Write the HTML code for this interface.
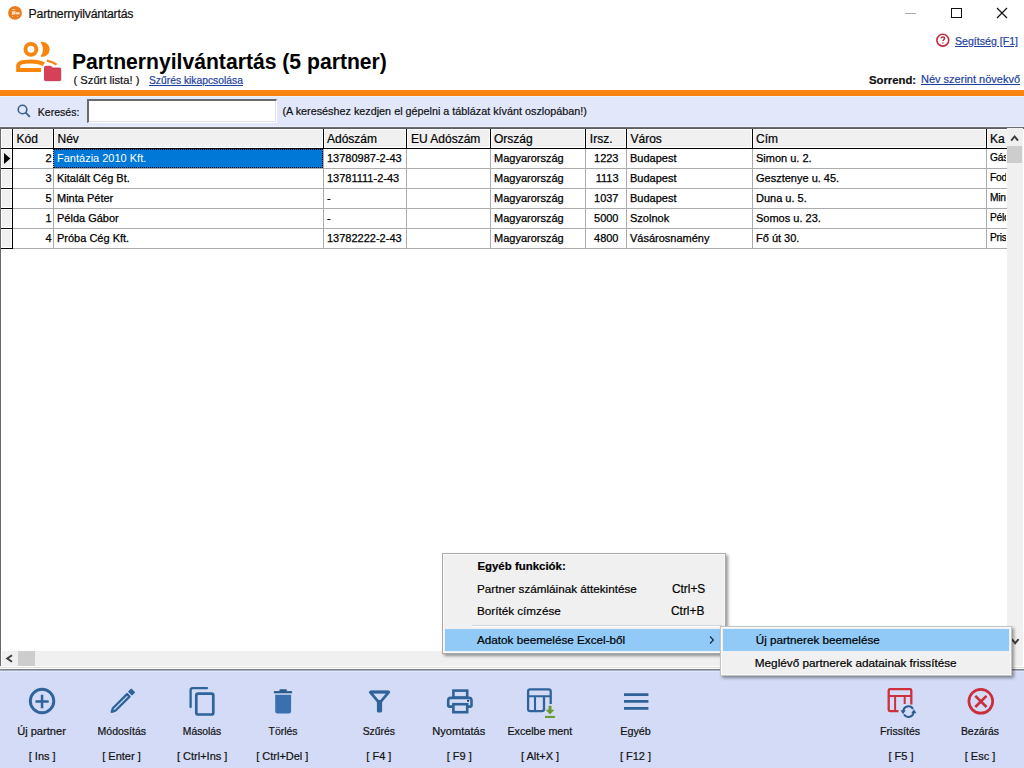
<!DOCTYPE html><html><head><meta charset="utf-8"><style>
*{margin:0;padding:0;box-sizing:border-box}
html,body{width:1024px;height:768px;overflow:hidden;background:#fff;font-family:"Liberation Sans",sans-serif;color:#000}
.a{position:absolute}
.t{position:absolute;white-space:nowrap;line-height:1;-webkit-text-stroke:0.2px currentColor}
.lnk{color:#1d3f9e;text-decoration:underline;text-underline-offset:0.5px}
.hd{font-size:12px;color:#000}
.d{font-size:11px;color:#000;-webkit-text-stroke:0.25px currentColor}
.tl{font-size:11px;color:#111;text-align:center}
</style></head><body>
<svg class="a" style="left:8px;top:6px" width="14" height="14" viewBox="8 6 14 14"><circle cx="15" cy="12.9" r="6.9" fill="#ec7b1f"/><rect x="12.2" y="9.2" width="3" height="0.9" fill="#fde3c8"/><path d="M11.9 11.2H15.6V14.4H13.2V15H11.9Z" fill="#fde3c8" opacity=".92"/><rect x="16" y="12.2" width="3.6" height="2.2" fill="#fde3c8"/><rect x="12.1" y="16" width="0.9" height="0.9" fill="#fde3c8"/><rect x="17.1" y="16" width="0.9" height="0.9" fill="#fde3c8"/></svg>
<div class="t" style="left:28.6px;top:8.1px;font-size:12.3px;letter-spacing:-0.24px;color:#111">Partnernyilvántartás</div>
<div class="a" style="left:905px;top:13px;width:11px;height:1px;background:#aaa"></div>
<div class="a" style="left:950.5px;top:7.8px;width:11px;height:10.2px;border:1.3px solid #111"></div>
<svg class="a" style="left:996px;top:7px" width="12" height="12" viewBox="0 0 12 12"><path d="M1 1L11 11M11 1L1 11" stroke="#111" stroke-width="1.2"/></svg>
<svg class="a" style="left:12px;top:36px" width="52" height="48" viewBox="12 36 52 48">
<circle cx="30.9" cy="49.3" r="5.45" fill="none" stroke="#f7860f" stroke-width="3.9"/>
<path d="M40.5 42A7.5 7.5 0 1 1 40.5 56.6A11.9 11.9 0 0 0 40.5 42Z" fill="#f7860f"/>
<path d="M41 69.9H18.2V65.5C18.2 62.5 24 61.4 30.5 61.4C36 61.4 41 62.5 43.8 64.3" fill="none" stroke="#f7860f" stroke-width="4"/>
<path d="M46.8 60.6C50 61.2 54 62.6 56.6 64.6" fill="none" stroke="#f7860f" stroke-width="2.3"/>
<path d="M44.5 67.5Q44.5 66.3 45.7 66.3H51L52.5 68H59.7Q60.75 68 60.75 69V79.7Q60.75 80.7 59.7 80.7H45.5Q44.5 80.7 44.5 79.7Z" fill="#d8405a" stroke="#b82f48" stroke-width=".8"/>
</svg>
<div class="t" style="left:72px;top:51.1px;font-size:21.15px;font-weight:bold;-webkit-text-stroke:0">Partnernyilvántartás (5 partner)</div>
<div class="t" style="left:73.5px;top:74.8px;font-size:11.2px;color:#111">( Szűrt lista! )</div>
<div class="t lnk" style="left:149px;top:76px;font-size:10.3px">Szűrés kikapcsolása</div>
<svg class="a" style="left:935px;top:33px" width="16" height="16" viewBox="0 0 16 16"><circle cx="7.8" cy="7.2" r="5.9" fill="none" stroke="#bf2b40" stroke-width="1.6"/><path d="M6 5.5Q6.2 3.9 7.9 3.9Q9.6 4 9.5 5.4Q9.4 6.4 8.5 7Q7.9 7.5 7.9 8.1" fill="none" stroke="#b0283e" stroke-width="1.4"/><circle cx="7.9" cy="9.9" r="0.75" fill="#b0283e"/></svg>
<div class="t lnk" style="left:955px;top:36px;font-size:10.6px">Segítség [F1]</div>
<div class="t" style="left:869px;top:75px;font-size:11.3px;font-weight:bold;color:#111">Sorrend:</div>
<div class="t lnk" style="left:921px;top:73.6px;font-size:11px">Név szerint növekvő</div>
<div class="a" style="left:0;top:90px;width:1024px;height:6px;background:#f98310"></div>
<div class="a" style="left:0;top:96px;width:1024px;height:31px;background:#e2e8fa"></div>
<div class="a" style="left:0;top:96px;width:1024px;height:1px;background:#eaf2f8"></div>
<svg class="a" style="left:16px;top:103px" width="16" height="16" viewBox="0 0 16 16"><circle cx="6.5" cy="6.5" r="4.3" fill="none" stroke="#3a5f8f" stroke-width="1.6"/><path d="M9.7 9.7L13.4 13.4" stroke="#3a5f8f" stroke-width="1.8" stroke-linecap="round"/></svg>
<div class="t" style="left:37.8px;top:107.3px;font-size:10.55px;color:#111">Keresés:</div>
<div class="a" style="left:87px;top:99px;width:190px;height:24px;background:#fff;border-top:2px solid #6a6a6a;border-left:2px solid #6a6a6a;border-right:1px solid #fff;border-bottom:1px solid #fff"></div>
<div class="a" style="left:89px;top:121px;width:187px;height:1px;background:#e2e2e6"></div>
<div class="a" style="left:275px;top:101px;width:1px;height:21px;background:#e2e2e6"></div>
<div class="a" style="left:0;top:126px;width:1024px;height:1px;background:#edf1fc"></div>
<div class="t" style="left:282.5px;top:106px;font-size:10.8px;color:#111">(A kereséshez kezdjen el gépelni a táblázat kívánt oszlopában!)</div>
<div class="a" style="left:0;top:127px;width:1024px;height:542px;background:#fff"></div>
<div class="a" style="left:0;top:127px;width:1024px;height:1px;background:#686c70"></div>
<div class="a" style="left:0;top:128px;width:1024px;height:1px;background:#5c5e62"></div>
<div class="a" style="left:0;top:127px;width:1px;height:540px;background:#6a6a6a"></div>
<div class="a" style="left:1px;top:129px;width:1006px;height:19px;background:#000"></div>
<div class="a" style="left:1px;top:148px;width:1006px;height:1px;background:#000"></div>
<div class="a" style="left:1px;top:129px;width:11px;height:19px;background:#f0f0f0;border:1px solid #fff"></div>
<div class="a" style="left:13px;top:129px;width:40px;height:19px;background:#f0f0f0;border:1px solid #fff;border-right-width:1px"></div>
<div class="a" style="left:54px;top:129px;width:269px;height:19px;background:#f0f0f0;border:1px solid #fff;border-right-width:1px"></div>
<div class="a" style="left:324px;top:129px;width:82px;height:19px;background:#f0f0f0;border:1px solid #fff;border-right-width:1px"></div>
<div class="a" style="left:407px;top:129px;width:83px;height:19px;background:#f0f0f0;border:1px solid #fff;border-right-width:1px"></div>
<div class="a" style="left:491px;top:129px;width:94px;height:19px;background:#f0f0f0;border:1px solid #fff;border-right-width:1px"></div>
<div class="a" style="left:586px;top:129px;width:40px;height:19px;background:#f0f0f0;border:1px solid #fff;border-right-width:1px"></div>
<div class="a" style="left:627px;top:129px;width:125px;height:19px;background:#f0f0f0;border:1px solid #fff;border-right-width:1px"></div>
<div class="a" style="left:753px;top:129px;width:233px;height:19px;background:#f0f0f0;border:1px solid #fff;border-right-width:1px"></div>
<div class="a" style="left:987px;top:129px;width:20px;height:19px;background:#f0f0f0;border:1px solid #fff;border-right-width:0px"></div>
<div class="a" style="left:12px;top:149px;width:1px;height:100px;background:#000"></div>
<div class="a" style="left:1px;top:149px;width:11px;height:19px;background:#f0f0f0;border:1px solid #fff"></div>
<div class="a" style="left:1px;top:168px;width:12px;height:1px;background:#000"></div>
<div class="a" style="left:1px;top:169px;width:11px;height:19px;background:#f0f0f0;border:1px solid #fff"></div>
<div class="a" style="left:1px;top:188px;width:12px;height:1px;background:#000"></div>
<div class="a" style="left:1px;top:189px;width:11px;height:19px;background:#f0f0f0;border:1px solid #fff"></div>
<div class="a" style="left:1px;top:208px;width:12px;height:1px;background:#000"></div>
<div class="a" style="left:1px;top:209px;width:11px;height:19px;background:#f0f0f0;border:1px solid #fff"></div>
<div class="a" style="left:1px;top:228px;width:12px;height:1px;background:#000"></div>
<div class="a" style="left:1px;top:229px;width:11px;height:19px;background:#f0f0f0;border:1px solid #fff"></div>
<div class="a" style="left:1px;top:248px;width:12px;height:1px;background:#000"></div>
<svg class="a" style="left:3px;top:152px" width="9" height="13" viewBox="0 0 9 13"><path d="M1 1L7.3 6.5L1 12Z" fill="#000"/></svg>
<div class="a" style="left:13px;top:168px;width:994px;height:1px;background:#acacac"></div>
<div class="a" style="left:13px;top:188px;width:994px;height:1px;background:#acacac"></div>
<div class="a" style="left:13px;top:208px;width:994px;height:1px;background:#acacac"></div>
<div class="a" style="left:13px;top:228px;width:994px;height:1px;background:#acacac"></div>
<div class="a" style="left:13px;top:248px;width:994px;height:1px;background:#acacac"></div>
<div class="a" style="left:53px;top:149px;width:1px;height:100px;background:#acacac"></div>
<div class="a" style="left:323px;top:149px;width:1px;height:100px;background:#acacac"></div>
<div class="a" style="left:406px;top:149px;width:1px;height:100px;background:#acacac"></div>
<div class="a" style="left:490px;top:149px;width:1px;height:100px;background:#acacac"></div>
<div class="a" style="left:585px;top:149px;width:1px;height:100px;background:#acacac"></div>
<div class="a" style="left:626px;top:149px;width:1px;height:100px;background:#acacac"></div>
<div class="a" style="left:752px;top:149px;width:1px;height:100px;background:#acacac"></div>
<div class="a" style="left:986px;top:149px;width:1px;height:100px;background:#acacac"></div>
<div class="a" style="left:54px;top:149px;width:269px;height:19px;background:#0078d7"></div>
<div class="a" style="left:53px;top:149px;width:270px;height:19px;border:1px dotted #000"></div>
<div class="a" style="left:0;top:0;width:1006px;height:768px;overflow:hidden">
<div class="t hd" style="left:16.5px;top:133px">Kód</div>
<div class="t hd" style="left:57.5px;top:133px">Név</div>
<div class="t hd" style="left:327px;top:133px">Adószám</div>
<div class="t hd" style="left:411px;top:133px">EU Adószám</div>
<div class="t hd" style="left:494px;top:133px">Ország</div>
<div class="t hd" style="left:589.8px;top:133px">Irsz.</div>
<div class="t hd" style="left:630.5px;top:133px">Város</div>
<div class="t hd" style="left:756px;top:133px">Cím</div>
<div class="t hd" style="left:990px;top:133px">Ka</div>
<div class="t d" style="left:-148.5px;width:200px;text-align:right;top:153px;color:#000">2</div>
<div class="t d" style="left:57px;top:153px;color:#fff;-webkit-text-stroke:0">Fantázia 2010 Kft.</div>
<div class="t d" style="left:327px;top:153px;color:#000">13780987-2-43</div>
<div class="t d" style="left:494px;top:153px;color:#000">Magyarország</div>
<div class="t d" style="left:418.5px;width:200px;text-align:right;top:153px;color:#000">1223</div>
<div class="t d" style="left:630px;top:153px;color:#000">Budapest</div>
<div class="t d" style="left:756px;top:153px;color:#000">Simon u. 2.</div>
<div class="t d" style="left:990px;top:153px;color:#000;font-size:10.2px;letter-spacing:-0.2px">Gáspár</div>
<div class="t d" style="left:-148.5px;width:200px;text-align:right;top:173px;color:#000">3</div>
<div class="t d" style="left:57px;top:173px;color:#000">Kitalált Cég Bt.</div>
<div class="t d" style="left:327px;top:173px;color:#000">13781111-2-43</div>
<div class="t d" style="left:494px;top:173px;color:#000">Magyarország</div>
<div class="t d" style="left:418.5px;width:200px;text-align:right;top:173px;color:#000">1113</div>
<div class="t d" style="left:630px;top:173px;color:#000">Budapest</div>
<div class="t d" style="left:756px;top:173px;color:#000">Gesztenye u. 45.</div>
<div class="t d" style="left:990px;top:173px;color:#000;font-size:10.2px;letter-spacing:-0.2px">Fodor</div>
<div class="t d" style="left:-148.5px;width:200px;text-align:right;top:193px;color:#000">5</div>
<div class="t d" style="left:57px;top:193px;color:#000">Minta Péter</div>
<div class="t d" style="left:327px;top:193px;color:#000">-</div>
<div class="t d" style="left:494px;top:193px;color:#000">Magyarország</div>
<div class="t d" style="left:418.5px;width:200px;text-align:right;top:193px;color:#000">1037</div>
<div class="t d" style="left:630px;top:193px;color:#000">Budapest</div>
<div class="t d" style="left:756px;top:193px;color:#000">Duna u. 5.</div>
<div class="t d" style="left:990px;top:193px;color:#000;font-size:10.2px;letter-spacing:-0.2px">Minta</div>
<div class="t d" style="left:-148.5px;width:200px;text-align:right;top:213px;color:#000">1</div>
<div class="t d" style="left:57px;top:213px;color:#000">Példa Gábor</div>
<div class="t d" style="left:327px;top:213px;color:#000">-</div>
<div class="t d" style="left:494px;top:213px;color:#000">Magyarország</div>
<div class="t d" style="left:418.5px;width:200px;text-align:right;top:213px;color:#000">5000</div>
<div class="t d" style="left:630px;top:213px;color:#000">Szolnok</div>
<div class="t d" style="left:756px;top:213px;color:#000">Somos u. 23.</div>
<div class="t d" style="left:990px;top:213px;color:#000;font-size:10.2px;letter-spacing:-0.2px">Példa</div>
<div class="t d" style="left:-148.5px;width:200px;text-align:right;top:233px;color:#000">4</div>
<div class="t d" style="left:57px;top:233px;color:#000">Próba Cég Kft.</div>
<div class="t d" style="left:327px;top:233px;color:#000">13782222-2-43</div>
<div class="t d" style="left:494px;top:233px;color:#000">Magyarország</div>
<div class="t d" style="left:418.5px;width:200px;text-align:right;top:233px;color:#000">4800</div>
<div class="t d" style="left:630px;top:233px;color:#000">Vásárosnamény</div>
<div class="t d" style="left:756px;top:233px;color:#000">Fő út 30.</div>
<div class="t d" style="left:990px;top:233px;color:#000;font-size:10.2px;letter-spacing:-0.2px">Prisz</div>
</div>
<div class="a" style="left:1007px;top:128px;width:16px;height:523px;background:#f0f0f0"></div>
<div class="a" style="left:1007px;top:146px;width:15px;height:17px;background:#cdcdcd"></div>
<svg class="a" style="left:1007px;top:131px" width="16" height="14" viewBox="0 0 16 14"><path d="M4.2 9.6L7.6 5.4L11 9.6" fill="none" stroke="#3c3c3c" stroke-width="1.9"/></svg>
<svg class="a" style="left:1007px;top:633px" width="16" height="14" viewBox="0 0 16 14"><path d="M4.8 6.2L8.2 10.2L11.6 6.2" fill="none" stroke="#3c3c3c" stroke-width="1.9"/></svg>
<div class="a" style="left:2px;top:651px;width:1021px;height:15px;background:#f0f0f0"></div>
<div class="a" style="left:18px;top:651px;width:17px;height:15px;background:#cdcdcd"></div>
<svg class="a" style="left:1px;top:651px" width="16" height="16" viewBox="0 0 16 16"><path d="M11 4.2L6.2 7.5L11 10.8" fill="none" stroke="#3c3c3c" stroke-width="1.9"/></svg>
<div class="a" style="left:0;top:666px;width:1024px;height:3px;background:#fff"></div>
<div class="a" style="left:0;top:667px;width:1024px;height:1px;background:#dcdcd8"></div>
<div class="a" style="left:0;top:669px;width:1024px;height:1px;background:#7c8288"></div>
<div class="a" style="left:0;top:670px;width:1024px;height:1px;background:#a6adc6"></div>
<div class="a" style="left:0;top:671px;width:1024px;height:97px;background:#d3dbf6"></div>
<div class="a" style="left:0;top:671px;width:1024px;height:1px;background:#e2e6fb"></div>
<div class="t" style="left:-18.5px;width:120px;text-align:center;top:725.80px;font-size:11.1px;color:#111">Új partner</div>
<div class="t" style="left:61.8px;width:120px;text-align:center;top:726.31px;font-size:10.5px;color:#111">Módosítás</div>
<div class="t" style="left:142px;width:120px;text-align:center;top:727.48px;font-size:10.3px;color:#111">Másolás</div>
<div class="t" style="left:223px;width:120px;text-align:center;top:727.40px;font-size:10.4px;color:#111">Törlés</div>
<div class="t" style="left:318.8px;width:120px;text-align:center;top:727.40px;font-size:10.4px;color:#111">Szűrés</div>
<div class="t" style="left:398.8px;width:120px;text-align:center;top:725.80px;font-size:11.1px;color:#111">Nyomtatás</div>
<div class="t" style="left:479.79999999999995px;width:120px;text-align:center;top:726.14px;font-size:10.7px;color:#111">Excelbe ment</div>
<div class="t" style="left:575.5px;width:120px;text-align:center;top:726.06px;font-size:10.8px;color:#111">Egyéb</div>
<div class="t" style="left:840.1px;width:120px;text-align:center;top:726.23px;font-size:10.6px;color:#111">Frissítés</div>
<div class="t" style="left:920px;width:120px;text-align:center;top:727.40px;font-size:10.4px;color:#111">Bezárás</div>
<div class="t" style="left:-17.799999999999997px;width:120px;text-align:center;top:750.5px;font-size:11px;color:#111">[ Ins ]</div>
<div class="t" style="left:61.5px;width:120px;text-align:center;top:750.5px;font-size:11px;color:#111">[ Enter ]</div>
<div class="t" style="left:142.2px;width:120px;text-align:center;top:750.5px;font-size:11px;color:#111">[ Ctrl+Ins ]</div>
<div class="t" style="left:222.3px;width:120px;text-align:center;top:750.5px;font-size:11px;color:#111">[ Ctrl+Del ]</div>
<div class="t" style="left:318.9px;width:120px;text-align:center;top:750.5px;font-size:11px;color:#111">[ F4 ]</div>
<div class="t" style="left:399.2px;width:120px;text-align:center;top:750.5px;font-size:11px;color:#111">[ F9 ]</div>
<div class="t" style="left:480px;width:120px;text-align:center;top:750.5px;font-size:11px;color:#111">[ Alt+X ]</div>
<div class="t" style="left:575.5px;width:120px;text-align:center;top:750.5px;font-size:11px;color:#111">[ F12 ]</div>
<div class="t" style="left:841px;width:120px;text-align:center;top:750.5px;font-size:11px;color:#111">[ F5 ]</div>
<div class="t" style="left:920px;width:120px;text-align:center;top:750.5px;font-size:11px;color:#111">[ Esc ]</div>
<svg class="a" style="left:0;top:671px" width="1024" height="97" viewBox="0 671 1024 97">
<circle cx="42.05" cy="701" r="11.75" fill="none" stroke="#2f6399" stroke-width="2.9"/>
<path d="M35.5 701.5H48.7M42.05 694.8V708.2" stroke="#2f6399" stroke-width="2.5"/>
<g transform="translate(111.3 712.3) rotate(-45)"><path d="M0.6 0L4 -1.75H24V1.75H4Z" fill="none" stroke="#2f6399" stroke-width="2.3" stroke-linejoin="round"/><rect x="26.3" y="-2.9" width="4.8" height="5.8" rx="0.9" fill="#2f6399"/></g>
<path d="M190.6 707V690.2Q190.6 688.1 192.7 688.1H207" fill="none" stroke="#2f6399" stroke-width="2.3" stroke-linecap="round"/>
<rect x="196.3" y="693.6" width="17" height="20.9" rx="1.8" fill="none" stroke="#2f6399" stroke-width="2.7"/>
<rect x="273.9" y="691.1" width="18.2" height="2.2" fill="#2b5a8c"/><rect x="279.4" y="689.3" width="7.5" height="2.5" rx="1" fill="#2b5a8c"/>
<path d="M275.2 694.8H291.1V711Q291.1 713.5 288.6 713.5H277.7Q275.2 713.5 275.2 711Z" fill="#3a70ad"/>
<path d="M370.2 692.2H388.8L379.5 703.2Z" fill="none" stroke="#2f6399" stroke-width="2.7" stroke-linejoin="round"/><rect x="370" y="690.6" width="19" height="2.6" rx="1" fill="#2f6399"/>
<rect x="376.9" y="700" width="5.2" height="12.5" rx="1.6" fill="#2f6399"/>
<rect x="453.4" y="690.6" width="13.8" height="7" fill="none" stroke="#2f6399" stroke-width="2.6"/>
<path d="M452.2 706.6H449.6Q448.2 706.6 448.2 705.2V700.4Q448.2 697.9 450.7 697.9H469Q471.5 697.9 471.5 700.4V705.2Q471.5 706.6 470.1 706.6H467.6" fill="none" stroke="#2f6399" stroke-width="2.6"/>
<rect x="453.4" y="704.2" width="13.8" height="8" fill="none" stroke="#2f6399" stroke-width="2.6"/>
<circle cx="468.1" cy="700.8" r="1.1" fill="#1d3050"/>
<path d="M550.7 703.9V691.5Q550.7 689.4 548.6 689.4H530.2Q528.1 689.4 528.1 691.5V709Q528.1 711.1 530.2 711.1H541.9Q544 711.1 544 709V696.2" fill="none" stroke="#2f6399" stroke-width="2.3"/>
<path d="M528.1 696.2H550.7M535 696.2V711.1" fill="none" stroke="#2f6399" stroke-width="2.1"/>
<path d="M548.5 705.8H551.5V709.8H554.3L550 714.6L545.7 709.8H548.5Z" fill="#6b9a2e"/><rect x="545" y="715.9" width="9.9" height="2.1" fill="#6b9a2e"/>
<path d="M624 694.7H648.4M624 701.4H648.4M624 708.4H648.4" stroke="#2f6399" stroke-width="2.8"/>
<path d="M898.5 711.1H890Q888.7 711.1 888.7 709.8V690.4Q888.7 689.1 890 689.1H910Q911.3 689.1 911.3 690.4V704.4" fill="none" stroke="#d0303c" stroke-width="2.3"/>
<path d="M888.7 696H911.3M895.1 696V711.1M904.7 696V704" fill="none" stroke="#d0303c" stroke-width="2"/>
<path d="M903.3 711.5A5.2 5.2 0 0 1 913 709" fill="none" stroke="#2c5c8e" stroke-width="2"/>
<path d="M900.6 710.2L905.8 710.2L903 714.2Z" fill="#2c5c8e"/>
<path d="M913.6 712A5.2 5.2 0 0 1 904 714.5" fill="none" stroke="#2c5c8e" stroke-width="2"/>
<path d="M916.4 713.2L911.2 713.2L914 709.2Z" fill="#2c5c8e"/>
<circle cx="980.8" cy="701.3" r="11.9" fill="none" stroke="#cb2e3b" stroke-width="2.7"/>
<path d="M975.3 695.8L986.5 707M986.5 695.8L975.3 707" stroke="#cb2e3b" stroke-width="2.6"/>
</svg>
<div class="a" style="left:442px;top:553px;width:284px;height:101px;background:#f0f0f0;border:1px solid #a8a8a8;box-shadow:2px 2px 3px rgba(0,0,0,.4)"></div>
<div class="a" style="left:443px;top:554px;width:282px;height:99px;border:1px solid #fafafa"></div>
<div class="a" style="left:472px;top:625px;width:250px;height:1px;background:#d4d4d4"></div>
<div class="a" style="left:472px;top:626px;width:250px;height:1px;background:#fff"></div>
<div class="a" style="left:445px;top:629px;width:278px;height:22px;background:#91c9f7"></div>
<div class="t" style="left:477.4px;top:561.31px;font-size:11.45px;font-weight:bold;color:#000">Egyéb funkciók:</div>
<div class="t" style="left:477px;top:583.40px;font-size:11.7px;color:#000">Partner számláinak áttekintése</div>
<div class="t" style="left:477px;top:605.10px;font-size:11.7px;color:#000">Boríték címzése</div>
<div class="t" style="left:477px;top:633.70px;font-size:11.7px;color:#000">Adatok beemelése Excel-ből</div>
<div class="t" style="left:671.9px;top:583.93px;font-size:11.9px;color:#000">Ctrl+S</div>
<div class="t" style="left:671px;top:605.93px;font-size:11.9px;color:#000">Ctrl+B</div>
<svg class="a" style="left:706px;top:633px" width="12" height="14" viewBox="0 0 12 14"><path d="M4 3.5L7.4 7L4 10.5" fill="none" stroke="#1a2a44" stroke-width="1.2"/></svg>
<div class="a" style="left:720px;top:626px;width:292px;height:50px;background:#f0f0f0;border:1px solid #c4c4c4;box-shadow:2px 2px 3px rgba(0,0,0,.4)"></div>
<div class="a" style="left:721px;top:627px;width:290px;height:48px;border:1px solid #fafafa"></div>
<div class="a" style="left:723px;top:629px;width:286px;height:22px;background:#91c9f7"></div>
<div class="t" style="left:755.7px;top:633.70px;font-size:11.7px;color:#000">Új partnerek beemelése</div>
<div class="t" style="left:754.8px;top:656.55px;font-size:11.75px;color:#000">Meglévő partnerek adatainak frissítése</div>
</body></html>
